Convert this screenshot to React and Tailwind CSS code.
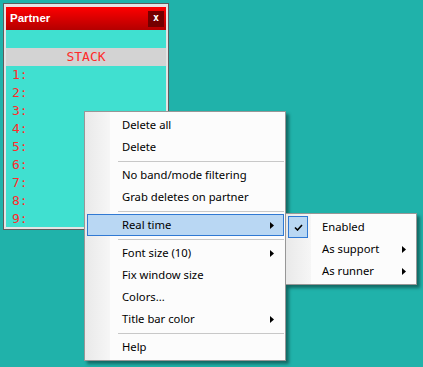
const mainItems = [
  { label: 'Delete all' },
  { label: 'Delete' },
  { sep: true },
  { label: 'No band/mode filtering' },
  { label: 'Grab deletes on partner' },
  { sep: true },
  { label: 'Real time', sub: true, active: true },
  { sep: true },
  { label: 'Font size (10)', sub: true },
  { label: 'Fix window size' },
  { label: 'Colors...' },
  { label: 'Title bar color', sub: true },
  { sep: true },
  { label: 'Help' },
]

const subItems = [
  { label: 'Enabled', checked: true },
  { label: 'As support', sub: true },
  { label: 'As runner', sub: true },
]

function Arrow() {
  return (
    <svg width="4" height="7" viewBox="0 0 4 7" className="ml-auto mr-[9px]">
      <path d="M0 0 L4 3.5 L0 7 Z" fill="#000" />
    </svg>
  )
}

function Check() {
  return (
    <svg width="9" height="7" viewBox="0 0 9 7">
      <path d="M1 3.5 L3.5 6 L8 1" stroke="#000" strokeWidth="1.6" fill="none" />
    </svg>
  )
}

function MenuRow({ item }) {
  if (item.sep) {
    return (
      <div className="h-[6px] flex items-center pl-[31px]">
        <div className="h-px w-full bg-[#c8c8c8]" />
      </div>
    )
  }
  return (
    <div
      className={`h-[22px] flex items-center pl-[34px] border ${
        item.active ? 'bg-[#b9d7f3] border-[#3079d3]' : 'border-transparent'
      }`}
    >
      <span>{item.label}</span>
      {item.sub && <Arrow />}
    </div>
  )
}

function SubRow({ item }) {
  return (
    <div className="h-[22px] flex items-center">
      <div
        className={`w-[20px] h-[22px] flex items-center justify-center border ${
          item.checked ? 'bg-[#b9d7f3] border-[#3079d3]' : 'border-transparent'
        }`}
      >
        {item.checked && <Check />}
      </div>
      <span className="ml-[14px]">{item.label}</span>
      {item.sub && <Arrow />}
    </div>
  )
}

export default function App() {
  const rows = [1, 2, 3, 4, 5, 6, 7, 8, 9]
  const mono = { fontFamily: '"DejaVu Sans Mono", "Liberation Mono", monospace' }

  return (
    <div
      className="relative w-[423px] h-[367px] bg-[#20b2aa] overflow-hidden"
      style={{ fontFamily: '"Noto Sans", "Liberation Sans", sans-serif' }}
    >
      {/* partner window */}
      <div className="ml-[3px] pt-[3px]">
        <div className="w-[166px] h-[227px] border border-[#5c5c5c] bg-[#e4e4e4] pt-[3px] px-[2px] pb-[2px]">
          <div className="w-[160px] h-[220px] bg-[#40e0d0] overflow-hidden">
            <div className="h-[23px] flex items-center justify-between bg-gradient-to-b from-[#ff0000] to-[#b40000] pl-[4px] pr-[2px]">
              <span
                className="text-white font-bold text-[11.5px] leading-none"
                style={{ fontFamily: '"Liberation Sans", Arial, sans-serif' }}
              >
                Partner
              </span>
              <div className="w-[16px] h-[16px] bg-[#740000] flex items-center justify-center text-white font-bold text-[10px] leading-none pb-[2px]" style={mono}>
                x
              </div>
            </div>
            <div className="h-[18px]" />
            <div className="h-[18px] bg-[#d3d3d3] flex items-center justify-center text-[#ff2a2a] text-[13px]" style={mono}>
              STACK
            </div>
            {rows.map((n) => (
              <div key={n} className="h-[18px] flex items-center pl-[6px] text-[#ff2a2a] text-[13px]" style={mono}>
                {n}:
              </div>
            ))}
          </div>
        </div>
      </div>

      {/* context menu */}
      <div className="absolute left-[84px] top-[111px] w-[202px] border border-[#979797] py-[2px] pl-[2px] pr-[1px] text-[11.25px] text-black bg-[linear-gradient(to_right,#e9e9e9_0px,#f6f6f6_25px,#fcfcfc_25px)] shadow-[3px_3px_3px_rgba(0,0,0,0.4)]">
        {mainItems.map((item, i) => (
          <MenuRow key={i} item={item} />
        ))}
      </div>

      {/* real time submenu */}
      <div className="absolute left-[285px] top-[213px] w-[132px] border border-[#979797] py-[2px] pl-[2px] pr-[1px] text-[11.25px] text-black bg-[linear-gradient(to_right,#e9e9e9_0px,#f6f6f6_25px,#fcfcfc_25px)] shadow-[3px_3px_3px_rgba(0,0,0,0.4)]">
        {subItems.map((item, i) => (
          <SubRow key={i} item={item} />
        ))}
      </div>
    </div>
  )
}
